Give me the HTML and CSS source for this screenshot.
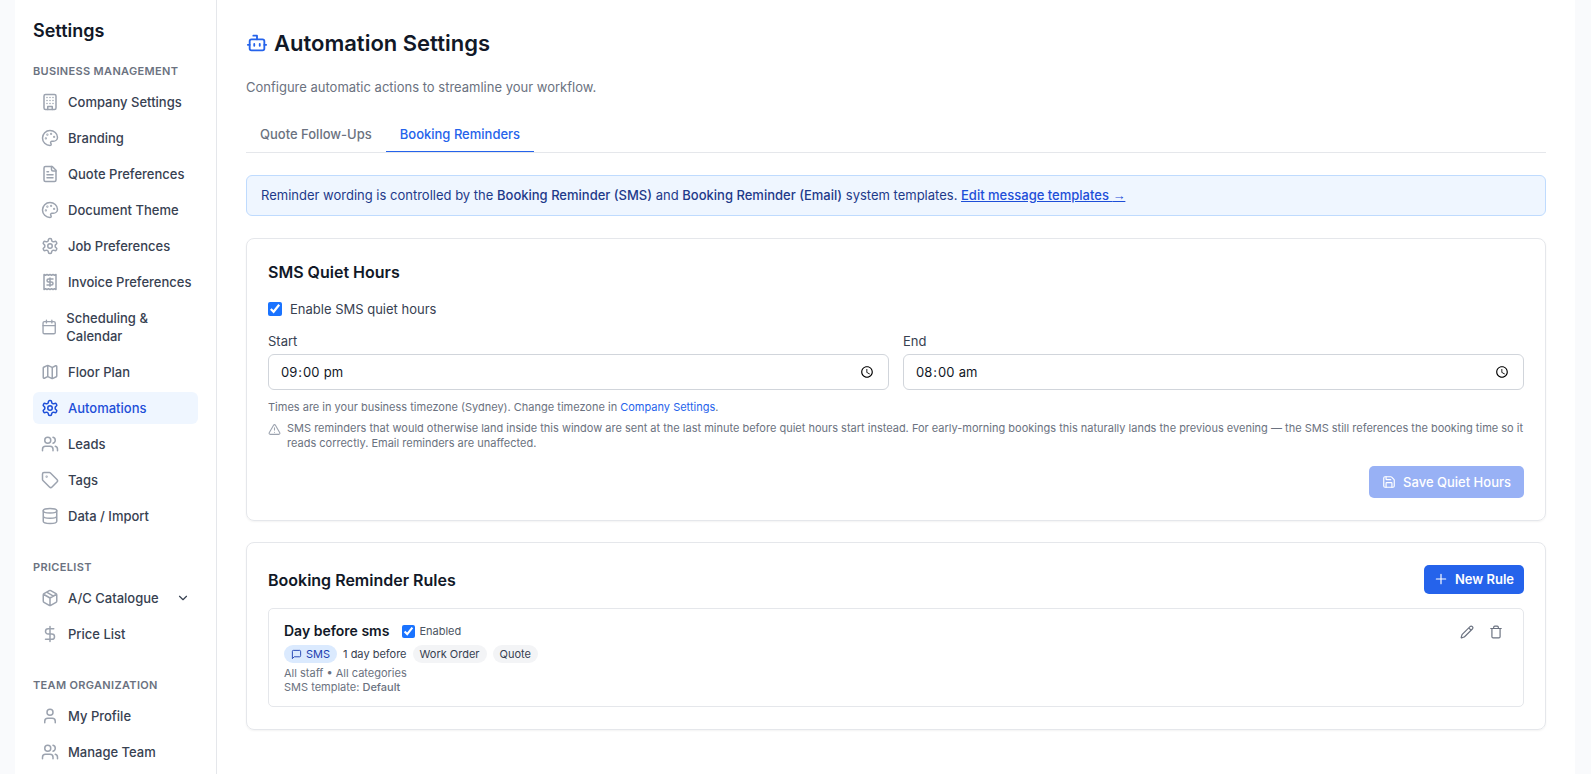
FILE: index.html
```html
<!DOCTYPE html>
<html lang="en-AU">
<head>
    <meta charset="UTF-8">
    <meta name="viewport" content="width=device-width, initial-scale=1.0">
    <title>Automation Settings</title>
    <link rel="stylesheet" href="styles.css">
</head>
<body>
    <div class="app">
        <aside class="sidebar">
            <h2 class="sidebar-title">Settings</h2>

            <nav class="nav-section">
                <h3>Business Management</h3>
                <a href="#" class="nav-item">
                    <svg class="icon" viewBox="0 0 24 24"><rect x="4" y="2" width="16" height="20" rx="2"/><path d="M9 22v-4h6v4M8 6h.01M16 6h.01M12 6h.01M12 10h.01M12 14h.01M16 10h.01M16 14h.01M8 10h.01M8 14h.01"/></svg>
                    <span>Company Settings</span>
                </a>
                <a href="#" class="nav-item">
                    <svg class="icon" viewBox="0 0 24 24"><circle cx="13.5" cy="6.5" r=".5"/><circle cx="17.5" cy="10.5" r=".5"/><circle cx="8.5" cy="7.5" r=".5"/><circle cx="6.5" cy="12.5" r=".5"/><path d="M12 2C6.5 2 2 6.5 2 12s4.5 10 10 10c.926 0 1.648-.746 1.648-1.688 0-.437-.18-.835-.437-1.125-.29-.289-.438-.652-.438-1.125a1.64 1.64 0 0 1 1.668-1.668h1.996c3.051 0 5.555-2.503 5.555-5.554C21.965 6.012 17.461 2 12 2z"/></svg>
                    <span>Branding</span>
                </a>
                <a href="#" class="nav-item">
                    <svg class="icon" viewBox="0 0 24 24"><path d="M15 2H6a2 2 0 0 0-2 2v16a2 2 0 0 0 2 2h12a2 2 0 0 0 2-2V7Z"/><path d="M14 2v4a2 2 0 0 0 2 2h4M10 9H8M16 13H8M16 17H8"/></svg>
                    <span>Quote Preferences</span>
                </a>
                <a href="#" class="nav-item">
                    <svg class="icon" viewBox="0 0 24 24"><circle cx="13.5" cy="6.5" r=".5"/><circle cx="17.5" cy="10.5" r=".5"/><circle cx="8.5" cy="7.5" r=".5"/><circle cx="6.5" cy="12.5" r=".5"/><path d="M12 2C6.5 2 2 6.5 2 12s4.5 10 10 10c.926 0 1.648-.746 1.648-1.688 0-.437-.18-.835-.437-1.125-.29-.289-.438-.652-.438-1.125a1.64 1.64 0 0 1 1.668-1.668h1.996c3.051 0 5.555-2.503 5.555-5.554C21.965 6.012 17.461 2 12 2z"/></svg>
                    <span>Document Theme</span>
                </a>
                <a href="#" class="nav-item">
                    <svg class="icon" viewBox="0 0 24 24"><path d="M12.22 2h-.44a2 2 0 0 0-2 2v.18a2 2 0 0 1-1 1.73l-.43.25a2 2 0 0 1-2 0l-.15-.08a2 2 0 0 0-2.73.73l-.22.38a2 2 0 0 0 .73 2.73l.15.1a2 2 0 0 1 1 1.72v.51a2 2 0 0 1-1 1.74l-.15.09a2 2 0 0 0-.73 2.73l.22.38a2 2 0 0 0 2.73.73l.15-.08a2 2 0 0 1 2 0l.43.25a2 2 0 0 1 1 1.73V20a2 2 0 0 0 2 2h.44a2 2 0 0 0 2-2v-.18a2 2 0 0 1 1-1.73l.43-.25a2 2 0 0 1 2 0l.15.08a2 2 0 0 0 2.73-.73l.22-.39a2 2 0 0 0-.73-2.73l-.15-.08a2 2 0 0 1-1-1.74v-.5a2 2 0 0 1 1-1.74l.15-.09a2 2 0 0 0 .73-2.73l-.22-.38a2 2 0 0 0-2.73-.73l-.15.08a2 2 0 0 1-2 0l-.43-.25a2 2 0 0 1-1-1.73V4a2 2 0 0 0-2-2z"/><circle cx="12" cy="12" r="3"/></svg>
                    <span>Job Preferences</span>
                </a>
                <a href="#" class="nav-item">
                    <svg class="icon" viewBox="0 0 24 24"><path d="M4 2v20l2-1 2 1 2-1 2 1 2-1 2 1 2-1 2 1V2l-2 1-2-1-2 1-2-1-2 1-2-1-2 1Z"/><path d="M16 8h-6a2 2 0 1 0 0 4h4a2 2 0 1 1 0 4H8M12 17.5v-11"/></svg>
                    <span>Invoice Preferences</span>
                </a>
                <a href="#" class="nav-item">
                    <svg class="icon" viewBox="0 0 24 24"><path d="M8 2v4M16 2v4M3 10h18"/><rect x="3" y="4" width="18" height="18" rx="2"/></svg>
                    <span>Scheduling &amp; Calendar</span>
                </a>
                <a href="#" class="nav-item">
                    <svg class="icon" viewBox="0 0 24 24"><path d="M14.106 5.553a2 2 0 0 0 1.788 0l3.659-1.83A1 1 0 0 1 21 4.619v12.764a1 1 0 0 1-.553.894l-4.553 2.277a2 2 0 0 1-1.788 0l-4.212-2.106a2 2 0 0 0-1.788 0l-3.659 1.83A1 1 0 0 1 3 19.381V6.618a1 1 0 0 1 .553-.894l4.553-2.277a2 2 0 0 1 1.788 0zM15 5.764v15M9 3.236v15"/></svg>
                    <span>Floor Plan</span>
                </a>
                <a href="#" class="nav-item active" aria-current="page">
                    <svg class="icon" viewBox="0 0 24 24"><path d="M12.22 2h-.44a2 2 0 0 0-2 2v.18a2 2 0 0 1-1 1.73l-.43.25a2 2 0 0 1-2 0l-.15-.08a2 2 0 0 0-2.73.73l-.22.38a2 2 0 0 0 .73 2.73l.15.1a2 2 0 0 1 1 1.72v.51a2 2 0 0 1-1 1.74l-.15.09a2 2 0 0 0-.73 2.73l.22.38a2 2 0 0 0 2.73.73l.15-.08a2 2 0 0 1 2 0l.43.25a2 2 0 0 1 1 1.73V20a2 2 0 0 0 2 2h.44a2 2 0 0 0 2-2v-.18a2 2 0 0 1 1-1.73l.43-.25a2 2 0 0 1 2 0l.15.08a2 2 0 0 0 2.73-.73l.22-.39a2 2 0 0 0-.73-2.73l-.15-.08a2 2 0 0 1-1-1.74v-.5a2 2 0 0 1 1-1.74l.15-.09a2 2 0 0 0 .73-2.73l-.22-.38a2 2 0 0 0-2.73-.73l-.15.08a2 2 0 0 1-2 0l-.43-.25a2 2 0 0 1-1-1.73V4a2 2 0 0 0-2-2z"/><circle cx="12" cy="12" r="3"/></svg>
                    <span>Automations</span>
                </a>
                <a href="#" class="nav-item">
                    <svg class="icon" viewBox="0 0 24 24"><path d="M16 21v-2a4 4 0 0 0-4-4H6a4 4 0 0 0-4 4v2"/><circle cx="9" cy="7" r="4"/><path d="M22 21v-2a4 4 0 0 0-3-3.87M16 3.13a4 4 0 0 1 0 7.75"/></svg>
                    <span>Leads</span>
                </a>
                <a href="#" class="nav-item">
                    <svg class="icon" viewBox="0 0 24 24"><path d="M12.586 2.586A2 2 0 0 0 11.172 2H4a2 2 0 0 0-2 2v7.172a2 2 0 0 0 .586 1.414l8.704 8.704a2.426 2.426 0 0 0 3.42 0l6.58-6.58a2.426 2.426 0 0 0 0-3.42z"/><circle cx="7.5" cy="7.5" r=".5"/></svg>
                    <span>Tags</span>
                </a>
                <a href="#" class="nav-item">
                    <svg class="icon" viewBox="0 0 24 24"><ellipse cx="12" cy="5" rx="9" ry="3"/><path d="M3 5v14a9 3 0 0 0 18 0V5M3 12a9 3 0 0 0 18 0"/></svg>
                    <span>Data / Import</span>
                </a>
            </nav>

            <nav class="nav-section">
                <h3>Pricelist</h3>
                <button type="button" class="nav-item" aria-expanded="false">
                    <svg class="icon" viewBox="0 0 24 24"><path d="m7.5 4.27 9 5.15M21 8a2 2 0 0 0-1-1.73l-7-4a2 2 0 0 0-2 0l-7 4A2 2 0 0 0 3 8v8a2 2 0 0 0 1 1.73l7 4a2 2 0 0 0 2 0l7-4A2 2 0 0 0 21 16ZM3.3 7l8.7 5 8.7-5M12 22V12"/></svg>
                    <span>A/C Catalogue</span>
                    <svg class="icon chevron" viewBox="0 0 24 24"><path d="m6 9 6 6 6-6"/></svg>
                </button>
                <a href="#" class="nav-item">
                    <svg class="icon" viewBox="0 0 24 24"><path d="M12 2v20M17 5H9.5a3.5 3.5 0 0 0 0 7h5a3.5 3.5 0 0 1 0 7H6"/></svg>
                    <span>Price List</span>
                </a>
            </nav>

            <nav class="nav-section">
                <h3>Team Organization</h3>
                <a href="#" class="nav-item">
                    <svg class="icon" viewBox="0 0 24 24"><path d="M19 21v-2a4 4 0 0 0-4-4H9a4 4 0 0 0-4 4v2"/><circle cx="12" cy="7" r="4"/></svg>
                    <span>My Profile</span>
                </a>
                <a href="#" class="nav-item">
                    <svg class="icon" viewBox="0 0 24 24"><path d="M16 21v-2a4 4 0 0 0-4-4H6a4 4 0 0 0-4 4v2"/><circle cx="9" cy="7" r="4"/><path d="M22 21v-2a4 4 0 0 0-3-3.87M16 3.13a4 4 0 0 1 0 7.75"/></svg>
                    <span>Manage Team</span>
                </a>
            </nav>
        </aside>

        <main class="content">
            <h1 class="page-title">
                <svg class="icon" viewBox="0 0 24 24"><path d="M12 8V4H8"/><rect x="4" y="8" width="16" height="12" rx="2"/><path d="M2 14h2M20 14h2M15 13v2M9 13v2"/></svg>
                Automation Settings
            </h1>
            <p class="page-subtitle">Configure automatic actions to streamline your workflow.</p>

            <div class="tabs" role="tablist">
                <button type="button" class="tab" role="tab" aria-selected="false">Quote Follow-Ups</button>
                <button type="button" class="tab active" role="tab" aria-selected="true">Booking Reminders</button>
            </div>

            <div class="banner">
                Reminder wording is controlled by the <strong>Booking Reminder (SMS)</strong> and <strong>Booking Reminder (Email)</strong> system templates. <a href="#">Edit message templates <span class="arrow">→</span></a>
            </div>

            <section class="card">
                <h2>SMS Quiet Hours</h2>
                <label class="check-row">
                    <input type="checkbox" checked>
                    Enable SMS quiet hours
                </label>
                <div class="time-grid">
                    <div class="field">
                        <label for="quiet-start">Start</label>
                        <input type="time" id="quiet-start" value="21:00">
                    </div>
                    <div class="field">
                        <label for="quiet-end">End</label>
                        <input type="time" id="quiet-end" value="08:00">
                    </div>
                </div>
                <p class="hint">Times are in your business timezone (Sydney). Change timezone in <a href="#">Company Settings</a>.</p>
                <div class="notice">
                    <svg class="icon" viewBox="0 0 24 24"><path d="m21.73 18-8-14a2 2 0 0 0-3.48 0l-8 14A2 2 0 0 0 4 21h16a2 2 0 0 0 1.73-3M12 9v4M12 17h.01"/></svg>
                    <p>SMS reminders that would otherwise land inside this window are sent at the last minute before quiet hours start instead. For early-morning bookings this naturally lands the previous evening — the SMS still references the booking time so it reads correctly. Email reminders are unaffected.</p>
                </div>
                <div class="card-actions">
                    <button type="button" class="btn btn-save" disabled>
                        <svg class="icon" viewBox="0 0 24 24"><path d="M15.2 3a2 2 0 0 1 1.4.6l3.8 3.8a2 2 0 0 1 .6 1.4V19a2 2 0 0 1-2 2H5a2 2 0 0 1-2-2V5a2 2 0 0 1 2-2z"/><path d="M17 21v-7a1 1 0 0 0-1-1H8a1 1 0 0 0-1 1v7M7 3v4a1 1 0 0 0 1 1h7"/></svg>
                        Save Quiet Hours
                    </button>
                </div>
            </section>

            <section class="card">
                <div class="card-header">
                    <h2>Booking Reminder Rules</h2>
                    <button type="button" class="btn btn-new">
                        <svg class="icon" viewBox="0 0 24 24"><path d="M4 12h16M12 4v16"/></svg>
                        New Rule
                    </button>
                </div>
                <div class="rule">
                    <div class="rule-body">
                        <div class="rule-title">
                            <h3>Day before sms</h3>
                            <label>
                                <input type="checkbox" checked>
                                Enabled
                            </label>
                        </div>
                        <div class="rule-tags">
                            <span class="tag tag-sms">
                                <svg class="icon" viewBox="0 0 24 24"><path d="M21 15a2 2 0 0 1-2 2H7l-4 4V5a2 2 0 0 1 2-2h14a2 2 0 0 1 2 2z"/></svg>
                                SMS
                            </span>
                            <span>1 day before</span>
                            <span class="tag">Work Order</span>
                            <span class="tag">Quote</span>
                        </div>
                        <p>All staff • All categories</p>
                        <p>SMS template: <strong>Default</strong></p>
                    </div>
                    <div class="rule-actions">
                        <button type="button" aria-label="Edit rule">
                            <svg class="icon" viewBox="0 0 24 24"><path d="M21.174 6.812a1 1 0 0 0-3.986-3.987L3.842 16.174a2 2 0 0 0-.5.83l-1.321 4.352a.5.5 0 0 0 .623.622l4.353-1.32a2 2 0 0 0 .83-.497zM15 5l4 4"/></svg>
                        </button>
                        <button type="button" aria-label="Delete rule">
                            <svg class="icon" viewBox="0 0 24 24"><path d="M3 6h18M19 6v14a2 2 0 0 1-2 2H7a2 2 0 0 1-2-2V6M8 6V4a2 2 0 0 1 2-2h4a2 2 0 0 1 2 2v2"/></svg>
                        </button>
                    </div>
                </div>
            </section>
        </main>
    </div>
</body>
</html>
```
FILE: styles.css
```css
:root {
    --blue: #2563eb;
    --blue-dark: #1d4ed8;
    --blue-light: #eff6ff;
    --text: #111827;
    --text-medium: #374151;
    --text-muted: #6b7280;
    --icon-muted: #9ca3af;
    --border: #e5e7eb;
}

* {
    box-sizing: border-box;
}

body {
    margin: 0;
    font-family: Inter, sans-serif;
    font-size: 13px;
    line-height: 18px;
    color: var(--text-medium);
    background-color: #f9fafc;
}

h1, h2, h3, p {
    margin: 0;
}

button, input {
    font: inherit;
    color: inherit;
}

button {
    border: none;
    background: none;
    padding: 0;
    cursor: pointer;
}

a {
    color: var(--blue);
    text-decoration: none;
}

strong {
    font-weight: 500;
}

.icon {
    width: 18px;
    height: 18px;
    fill: none;
    stroke: currentColor;
    stroke-width: 2;
    stroke-linecap: round;
    stroke-linejoin: round;
}

.app {
    display: flex;
    min-height: 100vh;
    margin: 0 16px 0 15px;
    background-color: #fff;
}

/* Sidebar */
.sidebar {
    flex: 0 0 202px;
    padding: 17px 18px 0;
    border-right: 1px solid var(--border);
}

.sidebar-title {
    margin-bottom: 19px;
    font-size: 18px;
    font-weight: 600;
    line-height: 27px;
    color: var(--text);
}

.nav-section {
    display: flex;
    flex-direction: column;
    gap: 4px;
    margin-bottom: 27px;
}

.nav-section:last-child {
    margin-bottom: 0;
}

.nav-section h3 {
    margin-bottom: 3px;
    font-size: 11px;
    font-weight: 600;
    line-height: 16px;
    letter-spacing: 0.03em;
    text-transform: uppercase;
    color: var(--text-muted);
}

.nav-item {
    display: flex;
    align-items: center;
    gap: 9px;
    padding: 7px 4px 7px 8px;
    border-radius: 6px;
    font-weight: 500;
    text-align: left;
    color: var(--text-medium);
}

.nav-item .icon {
    color: var(--icon-muted);
}

.nav-item:hover {
    background-color: #f9fafb;
}

.nav-item.active {
    background-color: var(--blue-light);
    color: var(--blue-dark);
}

.nav-item.active .icon {
    color: var(--blue-dark);
}

.nav-item .chevron {
    width: 14px;
    height: 14px;
    margin: 0 4px 0 auto;
    color: var(--text-medium);
}

/* Main content */
.content {
    flex: 1;
    min-width: 0;
    padding: 28px 29px;
}

.page-title {
    display: flex;
    align-items: center;
    gap: 6px;
    margin-bottom: 20px;
    font-size: 22px;
    font-weight: 600;
    line-height: 30px;
    color: var(--text);
}

.page-title .icon {
    width: 22px;
    height: 22px;
    color: var(--blue);
}

.page-subtitle {
    margin-bottom: 20px;
    color: var(--text-muted);
}

.tabs {
    display: flex;
    margin-bottom: 22px;
    border-bottom: 1px solid var(--border);
}

.tab {
    padding: 9px 14px 8px;
    border-bottom: 1px solid transparent;
    font-weight: 500;
    color: var(--text-muted);
}

.tab.active {
    border-bottom-color: var(--blue);
    color: var(--blue);
}

.banner {
    margin-bottom: 22px;
    padding: 10px 14px 11px;
    border: 1px solid #bfdbfe;
    border-radius: 6px;
    background-color: var(--blue-light);
    color: #1e3a8a;
}

.banner a {
    font-weight: 500;
    text-decoration: underline;
    color: var(--blue-dark);
}

.banner .arrow {
    font-family: "Liberation Sans", sans-serif;
    line-height: 1;
}

.card {
    margin-bottom: 21px;
    padding: 22px 21px;
    border: 1px solid var(--border);
    border-radius: 8px;
    box-shadow: 0 1px 2px rgba(0, 0, 0, 0.05);
}

.card:last-child {
    margin-bottom: 0;
}

.card h2 {
    font-size: 16px;
    font-weight: 600;
    line-height: 22px;
    color: var(--text);
}

input[type="checkbox"] {
    width: 14px;
    height: 14px;
    margin: 0;
    accent-color: #1a73ff;
}

.check-row {
    display: flex;
    align-items: center;
    gap: 8px;
    margin: 17px 0 14px;
}

.time-grid {
    display: grid;
    grid-template-columns: 1fr 1fr;
    gap: 14px;
}

.field {
    display: flex;
    flex-direction: column;
    gap: 4px;
}

.field input {
    height: 36px;
    padding: 0 11px;
    border: 1px solid #d1d5db;
    border-radius: 6px;
    background-color: #fff;
    color: var(--text);
}

.field input::-webkit-datetime-edit-ampm-field {
    text-transform: lowercase;
}

.hint {
    margin: 10px 0 6px;
    font-size: 11px;
    line-height: 15px;
    color: var(--text-muted);
}

.notice {
    display: flex;
    gap: 6px;
    margin-bottom: 15px;
    font-size: 11px;
    line-height: 15px;
    color: var(--text-muted);
}

.notice .icon {
    flex: none;
    width: 13px;
    height: 13px;
    margin-top: 2px;
    color: var(--icon-muted);
}

.card-actions {
    display: flex;
    justify-content: flex-end;
}

.btn {
    display: flex;
    align-items: center;
    gap: 7px;
    border-radius: 5px;
    background-color: var(--blue);
    color: #fff;
}

.btn .icon {
    width: 14px;
    height: 14px;
}

.btn-save {
    padding: 7px 13px;
    font-weight: 500;
    background-color: #98b1f5;
    cursor: default;
}

.btn-new {
    padding: 5px 10px 6px;
    font-weight: 600;
}

.card-header {
    display: flex;
    align-items: center;
    justify-content: space-between;
    margin-bottom: 14px;
}

/* Reminder rule */
.rule {
    display: flex;
    justify-content: space-between;
    padding: 14px 16px 12px 15px;
    border: 1px solid var(--border);
    border-radius: 5px;
    font-size: 11px;
    line-height: 14px;
}

.rule-title {
    display: flex;
    align-items: center;
    gap: 13px;
    margin-bottom: 6px;
}

.rule-title h3 {
    font-size: 14px;
    font-weight: 600;
    line-height: 16px;
    color: var(--text);
}

.rule-title label {
    display: flex;
    align-items: center;
    gap: 4px;
    color: #4b5563;
}

.rule-title input[type="checkbox"] {
    width: 13px;
    height: 13px;
}

.rule-tags {
    display: flex;
    align-items: center;
    gap: 6px;
    margin-bottom: 3px;
}

.tag {
    display: flex;
    align-items: center;
    gap: 4px;
    padding: 2px 7px;
    border-radius: 9px;
    background-color: #f3f4f6;
}

.tag-sms {
    background-color: #dbeafe;
    color: #1e40af;
}

.tag .icon {
    width: 11px;
    height: 11px;
}

.rule-body p {
    color: var(--text-muted);
}

.rule-actions {
    display: flex;
    align-items: flex-start;
    gap: 7px;
}

.rule-actions button {
    display: flex;
    padding: 2px 4px;
    color: var(--text-muted);
}

.rule-actions .icon {
    width: 14px;
    height: 14px;
}
```
